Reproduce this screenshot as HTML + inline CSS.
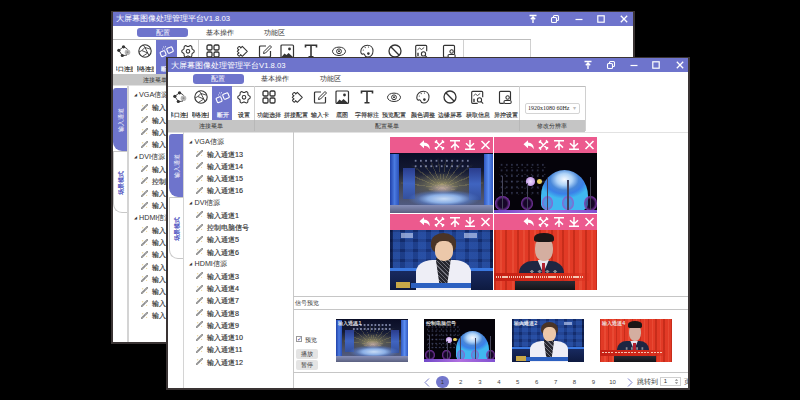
<!DOCTYPE html><html><head><meta charset="utf-8"><style>*{margin:0;padding:0;box-sizing:border-box}
html,body{width:800px;height:400px;overflow:hidden;background:#000;font-family:"Liberation Sans",sans-serif}
.win{-webkit-text-stroke:0}
.tl,.ti{-webkit-text-stroke:0.15px currentColor}
.win{position:absolute;width:524px;height:333px;background:#fff;border:2px solid #3a3434;border-top-width:1px;overflow:hidden}
.inner{position:absolute;left:0;top:1px;width:520px;height:330px}
.inner>*{position:absolute}
.title{left:0;top:-1px;width:520px;height:14px;background:#6e74cc}
.ttxt{position:absolute;left:3px;top:1.5px;font-size:7.7px;line-height:12px;color:#fff;white-space:nowrap;-webkit-text-stroke:0}
.tbtn{position:absolute;top:2px}
.tabs{left:0;top:13px;width:520px;height:14px}
.tline2{left:0;top:26.5px;width:418px;height:1px;background:#bdbdbd}
.pill{position:absolute;left:24.6px;top:2px;width:51.4px;height:9.6px;border-radius:3px;background:#6e74cc;color:#fff;font-size:6.5px;line-height:9.6px;text-align:center;-webkit-text-stroke:0}
.tab{position:absolute;top:2px;width:56px;height:9.6px;font-size:6.5px;line-height:9.6px;text-align:center;color:#333;-webkit-text-stroke:0}
.tb{left:0;top:27px;width:520px;height:34px}
.tb>*{position:absolute}
.act{left:43.5px;top:0;width:20.5px;height:34px;background:#6e74cc}
.ic{top:3px;width:16px;height:16px}
.ic svg{display:block}
.tl{position:absolute;top:24.1px;width:40px;height:9px;font-size:6.2px;line-height:9px;text-align:center;white-space:nowrap}
.tlc{top:0;height:34px;overflow:hidden}
.vdiv{top:0;width:1px;height:45px;background:#d0d0d0}
.dd{left:357px;top:17px;width:55px;height:10.5px;border:1px solid #d4d4d4;border-radius:2px;background:#fff;font-family:"Liberation Serif",serif;font-size:6px;line-height:8.5px;color:#222;padding-left:2px;white-space:nowrap}
.dd i{position:absolute;right:3px;top:0;font-style:normal;color:#bbb;font-size:6px}
.gbar{left:0;top:61px;width:417px;height:11.5px;background:#c5c5c5}
.gbar span{position:absolute;top:0;height:11px;font-size:6.4px;line-height:12.2px;text-align:center;color:#333}
.gd{position:absolute;top:0;width:1px;height:11px;background:#b8b8b8}
.hl2{left:0;top:72.5px;width:520px;height:1px;background:#e2e2e2}
.vtab1{left:0.6px;top:75px;width:14px;height:63.4px;background:#6e74cc;border-radius:3px 0 0 9px}
.vtab2{left:0.6px;top:138.4px;width:14px;height:62px;background:#fff;border:1px solid #c8c8c8;border-right:none;border-radius:0 0 0 9px}
.vtab1 span,.vtab2 span{position:absolute;left:0;top:0;width:63.4px;height:14px;transform-origin:0 0;transform:translate(1.2px,63.4px) rotate(-90deg);font-size:6px;line-height:14px;text-align:center;color:#fff;-webkit-text-stroke:0}
.vtab2 span{color:#4a4ec0;width:62px;height:13px;line-height:13px;transform:translate(1px,62px) rotate(-90deg);-webkit-text-stroke:0.2px #4a4ec0}
.vline{left:14.6px;top:73px;width:1.5px;height:260px;background:#d4d4d4}
.tg,.ti{height:12px;font-size:7.2px;line-height:12px;color:#333;white-space:nowrap}
.tg{left:21px}
.tg i{font-style:normal;font-size:4px;position:relative;top:-1px;margin-right:2.5px;color:#333}
.ti{left:28px;margin-top:0.7px}
.plug{display:inline-block;width:7px;height:7px;margin-right:4px;position:relative;top:0.5px}
.tline{left:125px;top:73px;width:1.2px;height:260px;background:#c8c8c8}
.grid{left:222.3px;top:78.2px;width:208px;height:154px;background:#fff}
.cell{position:absolute;width:103px;height:76px}
.ph{position:absolute;left:0;top:0;width:103px;height:15.5px;background:#ec5a8e}
.ph svg{position:absolute;right:-3px;top:0}
.cell .img{position:absolute;left:0;top:15.5px;width:103px;height:60.5px}
.img{overflow:hidden}
.img b{position:absolute;display:block}
.im1{background:linear-gradient(#0a0d26,#141a34 30%,#3e4048 50%,#4a5068 70%,#505a80 86%)}
.im2{background:#05030a}
.im3{background:radial-gradient(ellipse at 50% 40%,#1a3680,#122a68 70%,#0c1a48)}
.im4{background:#e23a26}
.hl{left:125px;width:395px;height:1px;background:#c6c6c6}
.sp{left:127px;top:239px;font-size:6px;line-height:10px;color:#333}
.chk{left:127.6px;top:277.2px;width:6px;height:6px;border:1px solid #999;font-size:6px;line-height:5px;color:#4040a0;text-align:center;background:#fff}
.chkl{left:137px;top:276px;font-size:6px;line-height:10px;color:#333}
.btn{left:127.6px;width:22px;height:10px;background:#e4e4e4;border-radius:2px;font-size:6px;line-height:10px;text-align:center;color:#333}
.thumb{top:260px;width:71.5px;height:43px}
.thumb b{position:absolute;display:block}
.cap{position:absolute;left:2px;top:1px;font-size:5.4px;line-height:7px;color:#eee;white-space:nowrap;-webkit-text-stroke:0.1px #eee}
.chev{top:318.5px}
.pc{left:268px;top:316.5px;width:12.6px;height:12.6px;border-radius:50%;background:#7377cc;color:#333;font-size:6px;line-height:12.6px;text-align:center}
.pn{top:318.8px;width:12px;height:9px;font-size:6px;line-height:9px;text-align:center;color:#444;-webkit-text-stroke:0}
.jump{left:469px;top:317.5px;font-size:6.5px;line-height:9px;color:#333}
.inp{left:491.7px;top:318px;width:21.5px;height:8.5px;border:1px solid #d0d0d0;font-size:6px;line-height:6.5px;color:#333;padding-left:3px}
.ye{left:515.5px;top:317.5px;font-size:6.5px;line-height:9px;color:#333}
</style></head><body><div class="win" style="left:110.5px;top:10.8px"><div class="inner"><div class="title"><span class="ttxt">大屏幕图像处理管理平台V1.8.03</span><svg class="tbtn" style="left:415.3px" width="10" height="10" viewBox="0 0 10 10"><path d="M1.5 1.5H8.5M5 3V9M2.8 5.2L5 3L7.2 5.2" stroke="#fff" stroke-width="1.4" fill="none"/></svg><svg class="tbtn" style="left:437.5px" width="10" height="10" viewBox="0 0 10 10"><rect x="1.5" y="3.5" width="5" height="5" rx="1" stroke="#fff" stroke-width="1.1" fill="none"/><path d="M3.5 3.5V2.5Q3.5 1.5 4.5 1.5H7.5Q8.5 1.5 8.5 2.5V5.5Q8.5 6.5 7.5 6.5H6.5" stroke="#fff" stroke-width="1.1" fill="none"/></svg><svg class="tbtn" style="left:461.3px" width="10" height="10" viewBox="0 0 10 10"><path d="M1.5 5.5H8.5" stroke="#fff" stroke-width="1.2"/></svg><svg class="tbtn" style="left:483.3px" width="10" height="10" viewBox="0 0 10 10"><rect x="1.8" y="1.8" width="6.4" height="6.4" stroke="#fff" stroke-width="1.2" fill="none"/></svg><svg class="tbtn" style="left:506.7px" width="10" height="10" viewBox="0 0 10 10"><path d="M1.8 1.8L8.2 8.2M8.2 1.8L1.8 8.2" stroke="#fff" stroke-width="1.3"/></svg></div><div class="tabs"><div class="pill">配置</div><div class="tab" style="left:79px">基本操作</div><div class="tab" style="left:134px">功能区</div></div><div class="tline2"></div><div class="tb"><div class="act"></div><div class="ic" style="left:3.5px"><svg width="16" height="16" viewBox="0 0 16 16"><circle cx="11.5" cy="9.3" r="2.8" fill="#b8b8b8"/><circle cx="11.5" cy="9.3" r="1" fill="#888"/><path d="M7.5 3.8L2.8 7.3L6.3 12.5M7.5 3.8Q11 5 11.5 6.5M6.3 12.5Q10 12.5 11 12" stroke="#333" stroke-width="0.9" fill="none"/><circle cx="7.5" cy="3.8" r="1.6" fill="#333"/><circle cx="2.8" cy="7.3" r="1.6" fill="#333"/><circle cx="6.3" cy="12.5" r="1.6" fill="#333"/></svg></div><div class="tlc" style="left:3.0px;width:17px"><div class="tl" style="left:-11.5px;color:#333">串口连接</div></div><div class="ic" style="left:24.5px"><svg width="16" height="16" viewBox="0 0 16 16"><circle cx="8" cy="8" r="6.2" stroke="#333" stroke-width="1.1" fill="none"/><path d="M4.75 7.5L8 4.5L10.75 10L4.75 7.5M4.75 7.5L1.9 9.2M8 4.5L6.2 1.9M8 4.5L13.6 6.2M10.75 10L12.2 13M10.75 10L5.2 13.6" stroke="#333" stroke-width="0.85" fill="none"/></svg></div><div class="tlc" style="left:24.0px;width:17px"><div class="tl" style="left:-11.5px;color:#333">网络连接</div></div><div class="ic" style="left:46.5px"><svg width="16" height="16" viewBox="0 0 16 16"><rect x="1.6" y="8.2" width="5" height="5" rx="1" transform="rotate(-22 4.1 10.7)" stroke="#fff" stroke-width="1.1" fill="none"/><rect x="8.2" y="4.5" width="5.6" height="5.2" rx="1" transform="rotate(-22 11 7.1)" stroke="#fff" stroke-width="1.1" fill="none"/><path d="M3.2 6.2L4 5.6M4.5 3.5L4.8 4.6M6.5 3.2L6.3 4.3M5.5 6L6.3 6.6" stroke="#fff" stroke-width="0.8"/></svg></div><div class="tl" style="left:34.5px;color:#fff">断开</div><div class="ic" style="left:67.5px"><svg width="16" height="16" viewBox="0 0 16 16"><path d="M14.2 8.3 L14.1 9.1 L13.3 9.7 L12.5 10.2 L12.1 10.7 L11.9 11.3 L11.9 12.2 L11.7 13.2 L11.1 13.7 L10.3 14.0 L9.4 13.6 L8.6 13.1 L8.0 13.1 L7.4 13.1 L6.6 13.6 L5.7 14.0 L4.9 13.7 L4.3 13.2 L4.1 12.2 L4.1 11.3 L3.9 10.7 L3.5 10.2 L2.7 9.7 L1.9 9.1 L1.8 8.3 L1.9 7.5 L2.7 6.9 L3.5 6.4 L3.9 5.9 L4.1 5.3 L4.1 4.4 L4.3 3.4 L4.9 2.9 L5.7 2.6 L6.6 3.0 L7.4 3.5 L8.0 3.6 L8.6 3.5 L9.4 3.0 L10.3 2.6 L11.1 2.9 L11.7 3.4 L11.9 4.4 L11.9 5.3 L12.1 5.9 L12.5 6.4 L13.3 6.9 L14.1 7.5z" stroke="#333" stroke-width="1.05" fill="none" stroke-linejoin="round"/><circle cx="8" cy="8.3" r="1.8" stroke="#333" stroke-width="1.05" fill="none"/></svg></div><div class="tl" style="left:55.5px;color:#333">设置</div><div class="ic" style="left:92.5px"><svg width="16" height="16" viewBox="0 0 16 16"><g stroke="#333" stroke-width="1.3" fill="none"><rect x="2" y="2" width="5" height="5" rx="1.3"/><rect x="9" y="2" width="5" height="5" rx="1.3"/><rect x="2" y="9" width="5" height="5" rx="1.3"/><rect x="9" y="9" width="5" height="5" rx="1.3"/></g></svg></div><div class="tl" style="left:80.5px;color:#333">功能选择</div><div class="ic" style="left:120px"><svg width="16" height="16" viewBox="0 0 16 16"><path d="M-4 -4H4V4H1.3C1.6 5 2.6 6.6 0 6.6C-2.6 6.6 -1.6 5 -1.3 4H-4V1.3C-5 1.6 -6.6 2.6 -6.6 0C-6.6 -2.6 -5 -1.6 -4 -1.3Z" transform="translate(9.3,8.3) rotate(45) scale(.88)" stroke="#333" stroke-width="1.2" fill="none" stroke-linejoin="round"/></svg></div><div class="tl" style="left:108px;color:#333">拼接配置</div><div class="ic" style="left:144px"><svg width="16" height="16" viewBox="0 0 16 16"><path d="M9 3H3.5Q2.5 3 2.5 4V13Q2.5 14 3.5 14H12.5Q13.5 14 13.5 13V8" stroke="#333" stroke-width="1.2" fill="none"/><path d="M6.5 10.5L7 8.5L13 2.5L14.5 4L8.5 10z" stroke="#333" stroke-width="1" fill="none" stroke-linejoin="round"/></svg></div><div class="tl" style="left:132px;color:#333">输入卡</div><div class="ic" style="left:166px"><svg width="16" height="16" viewBox="0 0 16 16"><rect x="2" y="2" width="12.5" height="12.5" rx="1" stroke="#333" stroke-width="1.2" fill="none"/><circle cx="10.5" cy="6" r="1.4" fill="#333"/><path d="M2.5 14L5.5 10.5L7.5 12L9.5 10L14 14z" fill="#333"/></svg></div><div class="tl" style="left:154px;color:#333">底图</div><div class="ic" style="left:190.5px"><svg width="16" height="16" viewBox="0 0 16 16"><path d="M2.5 4.5V2.2H13.5V4.5M8 2.2V13.8M5.5 13.8H10.5" stroke="#333" stroke-width="1.6" fill="none"/></svg></div><div class="tl" style="left:178.5px;color:#333">字符标注</div><div class="ic" style="left:218px"><svg width="16" height="16" viewBox="0 0 16 16"><ellipse cx="8" cy="8.3" rx="6.5" ry="4.2" stroke="#333" stroke-width="1" fill="none"/><circle cx="8" cy="8.3" r="2.4" stroke="#333" stroke-width="1" fill="none"/><circle cx="8" cy="8.3" r="1" fill="#333"/></svg></div><div class="tl" style="left:206px;color:#333">预览配置</div><div class="ic" style="left:246.5px"><svg width="16" height="16" viewBox="0 0 16 16"><path d="M8.5 2.2C4.5 2.2 1.8 5 1.8 8.5C1.8 10.5 2.8 11.5 4 11C5 10.6 5.6 11.2 5.8 12.2C6 13.5 7 14 8.5 14C11.8 14 14 11.5 14 8C14 4.6 11.8 2.2 8.5 2.2z" stroke="#333" stroke-width="1.05" fill="none"/><circle cx="4.3" cy="7" r="0.6" fill="#333"/><circle cx="6.2" cy="4.6" r="0.6" fill="#333"/><circle cx="9.5" cy="4" r="0.6" fill="#333"/><circle cx="9.4" cy="10.6" r="1.3" fill="#333"/></svg></div><div class="tl" style="left:234.5px;color:#333">颜色调整</div><div class="ic" style="left:274px"><svg width="16" height="16" viewBox="0 0 16 16"><circle cx="8" cy="8" r="6" stroke="#333" stroke-width="1.3" fill="none"/><path d="M3.8 3.8L12.2 12.2" stroke="#333" stroke-width="1.3"/></svg></div><div class="tl" style="left:262px;color:#333">边缘屏幕</div><div class="ic" style="left:301.5px"><svg width="16" height="16" viewBox="0 0 16 16"><g transform="translate(-0.8,0.3)"><path d="M8.5 14H3.5Q2.5 14 2.5 13V3Q2.5 2 3.5 2H12.5Q13.5 2 13.5 3V8" stroke="#333" stroke-width="1.15" fill="none"/><path d="M4.3 6.5L6.3 4.8L8.3 6.2L11 4.2" stroke="#333" stroke-width="0.85" fill="none"/><path d="M4.8 9.5V12.8" stroke="#333" stroke-width="1.4"/><circle cx="10.3" cy="10.6" r="2.1" stroke="#333" stroke-width="1.1" fill="none"/><path d="M11.8 12.1L14 14.3" stroke="#333" stroke-width="1.1"/></g></svg></div><div class="tl" style="left:289.5px;color:#333">获取信息</div><div class="ic" style="left:329.5px"><svg width="16" height="16" viewBox="0 0 16 16"><g transform="translate(-1,0.3)"><path d="M6.8 14H3.5Q2.5 14 2.5 13V3Q2.5 2 3.5 2H12.5Q13.5 2 13.5 3V10.8" stroke="#333" stroke-width="1.15" fill="none"/><circle cx="10.6" cy="8.2" r="1.7" stroke="#333" stroke-width="1.05" fill="none"/><rect x="7" y="11.2" width="7.2" height="2.9" rx="1.2" stroke="#333" stroke-width="1.05" fill="none"/></g></svg></div><div class="tl" style="left:317.5px;color:#333">异控设置</div><div class="vdiv" style="left:85.5px"></div><div class="vdiv" style="left:350.5px"></div><div class="vdiv" style="left:417px"></div><div class="dd"><span>1920x1080 60Hz</span><i>&#9662;</i></div></div><div class="gbar"><span style="left:0;width:85.5px">连接菜单</span><span style="left:86.5px;width:264px">配置菜单</span><span style="left:351.5px;width:65.5px">修改分辨率</span><div class="gd" style="left:85.5px"></div><div class="gd" style="left:350.5px"></div></div><div class="hl2"></div><div class="vtab1"><span>输入通道</span></div><div class="vtab2"><span>场景模式</span></div><div class="vline"></div><div class="tg" style="top:76.7px"><i>&#9698;</i>VGA信源</div><div class="ti" style="top:88.9px"><svg class="plug" width="7" height="7" viewBox="0 0 7 7"><path d="M0.8 6.2L3 4M3.8 3.2L6.2 0.8" stroke="#8c8c8c" stroke-width="1.9" stroke-linecap="round"/><path d="M1.5 6L2.6 4.9M4.3 2.7L5.6 1.4" stroke="#c8c8c8" stroke-width=".6"/><circle cx="1.6" cy="1.8" r=".8" fill="#ecd8a0"/><circle cx="5.6" cy="5.4" r=".6" fill="#ecd8a0"/></svg>输入通道13</div><div class="ti" style="top:101.2px"><svg class="plug" width="7" height="7" viewBox="0 0 7 7"><path d="M0.8 6.2L3 4M3.8 3.2L6.2 0.8" stroke="#8c8c8c" stroke-width="1.9" stroke-linecap="round"/><path d="M1.5 6L2.6 4.9M4.3 2.7L5.6 1.4" stroke="#c8c8c8" stroke-width=".6"/><circle cx="1.6" cy="1.8" r=".8" fill="#ecd8a0"/><circle cx="5.6" cy="5.4" r=".6" fill="#ecd8a0"/></svg>输入通道14</div><div class="ti" style="top:113.4px"><svg class="plug" width="7" height="7" viewBox="0 0 7 7"><path d="M0.8 6.2L3 4M3.8 3.2L6.2 0.8" stroke="#8c8c8c" stroke-width="1.9" stroke-linecap="round"/><path d="M1.5 6L2.6 4.9M4.3 2.7L5.6 1.4" stroke="#c8c8c8" stroke-width=".6"/><circle cx="1.6" cy="1.8" r=".8" fill="#ecd8a0"/><circle cx="5.6" cy="5.4" r=".6" fill="#ecd8a0"/></svg>输入通道15</div><div class="ti" style="top:125.7px"><svg class="plug" width="7" height="7" viewBox="0 0 7 7"><path d="M0.8 6.2L3 4M3.8 3.2L6.2 0.8" stroke="#8c8c8c" stroke-width="1.9" stroke-linecap="round"/><path d="M1.5 6L2.6 4.9M4.3 2.7L5.6 1.4" stroke="#c8c8c8" stroke-width=".6"/><circle cx="1.6" cy="1.8" r=".8" fill="#ecd8a0"/><circle cx="5.6" cy="5.4" r=".6" fill="#ecd8a0"/></svg>输入通道16</div><div class="tg" style="top:137.9px"><i>&#9698;</i>DVI信源</div><div class="ti" style="top:150.1px"><svg class="plug" width="7" height="7" viewBox="0 0 7 7"><path d="M0.8 6.2L3 4M3.8 3.2L6.2 0.8" stroke="#8c8c8c" stroke-width="1.9" stroke-linecap="round"/><path d="M1.5 6L2.6 4.9M4.3 2.7L5.6 1.4" stroke="#c8c8c8" stroke-width=".6"/><circle cx="1.6" cy="1.8" r=".8" fill="#ecd8a0"/><circle cx="5.6" cy="5.4" r=".6" fill="#ecd8a0"/></svg>输入通道1</div><div class="ti" style="top:162.4px"><svg class="plug" width="7" height="7" viewBox="0 0 7 7"><path d="M0.8 6.2L3 4M3.8 3.2L6.2 0.8" stroke="#8c8c8c" stroke-width="1.9" stroke-linecap="round"/><path d="M1.5 6L2.6 4.9M4.3 2.7L5.6 1.4" stroke="#c8c8c8" stroke-width=".6"/><circle cx="1.6" cy="1.8" r=".8" fill="#ecd8a0"/><circle cx="5.6" cy="5.4" r=".6" fill="#ecd8a0"/></svg>控制电脑信号</div><div class="ti" style="top:174.6px"><svg class="plug" width="7" height="7" viewBox="0 0 7 7"><path d="M0.8 6.2L3 4M3.8 3.2L6.2 0.8" stroke="#8c8c8c" stroke-width="1.9" stroke-linecap="round"/><path d="M1.5 6L2.6 4.9M4.3 2.7L5.6 1.4" stroke="#c8c8c8" stroke-width=".6"/><circle cx="1.6" cy="1.8" r=".8" fill="#ecd8a0"/><circle cx="5.6" cy="5.4" r=".6" fill="#ecd8a0"/></svg>输入通道5</div><div class="ti" style="top:186.9px"><svg class="plug" width="7" height="7" viewBox="0 0 7 7"><path d="M0.8 6.2L3 4M3.8 3.2L6.2 0.8" stroke="#8c8c8c" stroke-width="1.9" stroke-linecap="round"/><path d="M1.5 6L2.6 4.9M4.3 2.7L5.6 1.4" stroke="#c8c8c8" stroke-width=".6"/><circle cx="1.6" cy="1.8" r=".8" fill="#ecd8a0"/><circle cx="5.6" cy="5.4" r=".6" fill="#ecd8a0"/></svg>输入通道6</div><div class="tg" style="top:199.1px"><i>&#9698;</i>HDMI信源</div><div class="ti" style="top:211.3px"><svg class="plug" width="7" height="7" viewBox="0 0 7 7"><path d="M0.8 6.2L3 4M3.8 3.2L6.2 0.8" stroke="#8c8c8c" stroke-width="1.9" stroke-linecap="round"/><path d="M1.5 6L2.6 4.9M4.3 2.7L5.6 1.4" stroke="#c8c8c8" stroke-width=".6"/><circle cx="1.6" cy="1.8" r=".8" fill="#ecd8a0"/><circle cx="5.6" cy="5.4" r=".6" fill="#ecd8a0"/></svg>输入通道3</div><div class="ti" style="top:223.6px"><svg class="plug" width="7" height="7" viewBox="0 0 7 7"><path d="M0.8 6.2L3 4M3.8 3.2L6.2 0.8" stroke="#8c8c8c" stroke-width="1.9" stroke-linecap="round"/><path d="M1.5 6L2.6 4.9M4.3 2.7L5.6 1.4" stroke="#c8c8c8" stroke-width=".6"/><circle cx="1.6" cy="1.8" r=".8" fill="#ecd8a0"/><circle cx="5.6" cy="5.4" r=".6" fill="#ecd8a0"/></svg>输入通道4</div><div class="ti" style="top:235.8px"><svg class="plug" width="7" height="7" viewBox="0 0 7 7"><path d="M0.8 6.2L3 4M3.8 3.2L6.2 0.8" stroke="#8c8c8c" stroke-width="1.9" stroke-linecap="round"/><path d="M1.5 6L2.6 4.9M4.3 2.7L5.6 1.4" stroke="#c8c8c8" stroke-width=".6"/><circle cx="1.6" cy="1.8" r=".8" fill="#ecd8a0"/><circle cx="5.6" cy="5.4" r=".6" fill="#ecd8a0"/></svg>输入通道7</div><div class="ti" style="top:248.1px"><svg class="plug" width="7" height="7" viewBox="0 0 7 7"><path d="M0.8 6.2L3 4M3.8 3.2L6.2 0.8" stroke="#8c8c8c" stroke-width="1.9" stroke-linecap="round"/><path d="M1.5 6L2.6 4.9M4.3 2.7L5.6 1.4" stroke="#c8c8c8" stroke-width=".6"/><circle cx="1.6" cy="1.8" r=".8" fill="#ecd8a0"/><circle cx="5.6" cy="5.4" r=".6" fill="#ecd8a0"/></svg>输入通道8</div><div class="ti" style="top:260.3px"><svg class="plug" width="7" height="7" viewBox="0 0 7 7"><path d="M0.8 6.2L3 4M3.8 3.2L6.2 0.8" stroke="#8c8c8c" stroke-width="1.9" stroke-linecap="round"/><path d="M1.5 6L2.6 4.9M4.3 2.7L5.6 1.4" stroke="#c8c8c8" stroke-width=".6"/><circle cx="1.6" cy="1.8" r=".8" fill="#ecd8a0"/><circle cx="5.6" cy="5.4" r=".6" fill="#ecd8a0"/></svg>输入通道9</div><div class="ti" style="top:272.5px"><svg class="plug" width="7" height="7" viewBox="0 0 7 7"><path d="M0.8 6.2L3 4M3.8 3.2L6.2 0.8" stroke="#8c8c8c" stroke-width="1.9" stroke-linecap="round"/><path d="M1.5 6L2.6 4.9M4.3 2.7L5.6 1.4" stroke="#c8c8c8" stroke-width=".6"/><circle cx="1.6" cy="1.8" r=".8" fill="#ecd8a0"/><circle cx="5.6" cy="5.4" r=".6" fill="#ecd8a0"/></svg>输入通道10</div><div class="ti" style="top:284.8px"><svg class="plug" width="7" height="7" viewBox="0 0 7 7"><path d="M0.8 6.2L3 4M3.8 3.2L6.2 0.8" stroke="#8c8c8c" stroke-width="1.9" stroke-linecap="round"/><path d="M1.5 6L2.6 4.9M4.3 2.7L5.6 1.4" stroke="#c8c8c8" stroke-width=".6"/><circle cx="1.6" cy="1.8" r=".8" fill="#ecd8a0"/><circle cx="5.6" cy="5.4" r=".6" fill="#ecd8a0"/></svg>输入通道11</div><div class="ti" style="top:297.0px"><svg class="plug" width="7" height="7" viewBox="0 0 7 7"><path d="M0.8 6.2L3 4M3.8 3.2L6.2 0.8" stroke="#8c8c8c" stroke-width="1.9" stroke-linecap="round"/><path d="M1.5 6L2.6 4.9M4.3 2.7L5.6 1.4" stroke="#c8c8c8" stroke-width=".6"/><circle cx="1.6" cy="1.8" r=".8" fill="#ecd8a0"/><circle cx="5.6" cy="5.4" r=".6" fill="#ecd8a0"/></svg>输入通道12</div><div class="tline"></div><div class="grid"><div class="cell" style="left:0px;top:0px"><div class="ph"><svg width="80" height="15" viewBox="0 0 80 15"><path d="M3.5 7.2L8 3.2V5.6Q13.5 5.6 14 12.2Q11.5 8.8 8 8.8V11.2z" fill="#fff"/><g transform="translate(23.5,8)" stroke="#fff" stroke-width="1.5" fill="none"><path d="M-3.8 -3.8L3.8 3.8M3.8 -3.8L-3.8 3.8M-4.6 -2.4L-2.4 -4.6M4.6 -2.4L2.4 -4.6M-4.6 2.4L-2.4 4.6M4.6 2.4L2.4 4.6"/></g><g transform="translate(39,8)" stroke="#fff" stroke-width="1.5" fill="none"><path d="M-5 -4.2H5M0 -4.2V5M-4 2.6L0 -1.2L4 2.6"/></g><g transform="translate(54,8)" stroke="#fff" stroke-width="1.5" fill="none"><path d="M-5 4.3H5M0 -5V4.3M-4 -1.8L0 2L4 -1.8"/></g><g transform="translate(69.5,8)" stroke="#fff" stroke-width="1.6" fill="none"><path d="M-4 -4L4 4M4 -4L-4 4"/></g></svg></div><div class="img im1"><b style="left:10%;top:0;width:80%;height:62%;background:repeating-conic-gradient(from -60deg at 50% 95%,transparent 0deg 6deg,rgba(225,205,110,.32) 6deg 9deg,transparent 9deg 15deg);-webkit-mask-image:radial-gradient(ellipse 60% 90% at 50% 100%,#000 40%,transparent 100%)"></b><b style="left:22%;top:9%;width:56%;height:18%;background:radial-gradient(circle,rgba(200,210,250,.55) 0 0.7px,transparent 1.3px) 0 0/9% 50%"></b><b style="left:18%;top:30%;width:64%;height:42%;background:radial-gradient(ellipse 50% 50% at 50% 55%,rgba(175,165,110,.75),rgba(100,100,85,.5) 60%,transparent 100%)"></b><b style="left:0;top:2%;width:8%;height:84%;background:linear-gradient(90deg,#2040a8,#4a7ae0 50%,#2a50b8)"></b><b style="right:0;top:2%;width:9%;height:86%;background:linear-gradient(90deg,#3058c0,#5a8cf0 50%,#3058c0)"></b><b style="left:12%;top:26%;width:12%;height:50%;background:linear-gradient(#2a3c8c,#4064c0 50%,#34509c)"></b><b style="left:76%;top:26%;width:12%;height:52%;background:linear-gradient(#2a3c8c,#4064c0 50%,#34509c)"></b><b style="left:17%;top:58%;width:70%;height:30%;background:radial-gradient(ellipse 50% 50% at 50% 60%,#c8dcf6,#8cb0e6 45%,rgba(90,130,210,.55) 72%,transparent 100%)"></b><b style="left:30%;top:46%;width:42%;height:26%;background:radial-gradient(ellipse 50% 50%,rgba(235,200,210,.55),transparent 70%)"></b><b style="left:0;top:86%;width:100%;height:14%;background:linear-gradient(#8890b8,#5a6080)"></b></div></div><div class="cell" style="left:104px;top:0px"><div class="ph"><svg width="80" height="15" viewBox="0 0 80 15"><path d="M3.5 7.2L8 3.2V5.6Q13.5 5.6 14 12.2Q11.5 8.8 8 8.8V11.2z" fill="#fff"/><g transform="translate(23.5,8)" stroke="#fff" stroke-width="1.5" fill="none"><path d="M-3.8 -3.8L3.8 3.8M3.8 -3.8L-3.8 3.8M-4.6 -2.4L-2.4 -4.6M4.6 -2.4L2.4 -4.6M-4.6 2.4L-2.4 4.6M4.6 2.4L2.4 4.6"/></g><g transform="translate(39,8)" stroke="#fff" stroke-width="1.5" fill="none"><path d="M-5 -4.2H5M0 -4.2V5M-4 2.6L0 -1.2L4 2.6"/></g><g transform="translate(54,8)" stroke="#fff" stroke-width="1.5" fill="none"><path d="M-5 4.3H5M0 -5V4.3M-4 -1.8L0 2L4 -1.8"/></g><g transform="translate(69.5,8)" stroke="#fff" stroke-width="1.6" fill="none"><path d="M-4 -4L4 4M4 -4L-4 4"/></g></svg></div><div class="img im2"><b style="left:5%;top:15%;width:45%;height:55%;background:radial-gradient(circle,rgba(150,170,240,.35) 0 0.5px,transparent 1px) 0 0/11% 17%,radial-gradient(circle,rgba(200,210,255,.25) 0 0.5px,transparent 1px) 3px 2px/14% 21%"></b><b style="left:45%;top:28%;width:46%;height:72%;border-radius:50% 50% 35% 35%/60% 60% 20% 20%;background:radial-gradient(ellipse 55% 45% at 50% 22%,#f4f8ff 0%,#b0d4f8 30%,rgba(80,150,240,.9) 55%,#3a80e8 75%,#40b8f0 100%)"></b><b style="left:31%;top:41%;width:9%;height:14%;border-radius:50%;background:radial-gradient(#f0e0ff,#b080e0)"></b><b style="left:41.5%;top:44%;width:5%;height:8%;border-radius:50%;background:#e8d060"></b><b style="left:1%;top:72%;width:14%;height:24%;border-radius:50%;background:radial-gradient(rgba(40,10,70,.5) 40%,#9040c0 75%,rgba(140,60,200,.6))"></b><b style="left:26%;top:73%;width:12%;height:22%;border-radius:50%;background:radial-gradient(rgba(40,10,70,.5) 40%,#9040c0 75%,rgba(140,60,200,.6))"></b><b style="left:46%;top:72%;width:11%;height:23%;border-radius:50%;background:radial-gradient(rgba(100,80,200,.3) 40%,#a050c8 80%,rgba(140,60,200,.6))"></b><b style="left:66%;top:72%;width:11%;height:23%;border-radius:50%;background:radial-gradient(rgba(100,80,200,.3) 40%,#a050c8 80%,rgba(140,60,200,.6))"></b><b style="left:87%;top:72%;width:13%;height:24%;border-radius:50%;background:radial-gradient(rgba(40,10,70,.5) 40%,#9040c0 75%,rgba(140,60,200,.6))"></b><b style="left:0;top:94%;width:100%;height:6%;background:linear-gradient(90deg,#7048c8,#b070e0,#8050d0)"></b><b style="left:7.5%;top:38%;width:1.2%;height:56%;background:#45455a"></b><b style="left:32%;top:50%;width:1.2%;height:44%;background:#45455a"></b><b style="left:51%;top:42%;width:1.5%;height:52%;background:#40405a"></b><b style="left:71%;top:45%;width:1.2%;height:49%;background:#40405a"></b><b style="left:93%;top:40%;width:1.2%;height:54%;background:#45455a"></b></div></div><div class="cell" style="left:0px;top:77px"><div class="ph"><svg width="80" height="15" viewBox="0 0 80 15"><path d="M3.5 7.2L8 3.2V5.6Q13.5 5.6 14 12.2Q11.5 8.8 8 8.8V11.2z" fill="#fff"/><g transform="translate(23.5,8)" stroke="#fff" stroke-width="1.5" fill="none"><path d="M-3.8 -3.8L3.8 3.8M3.8 -3.8L-3.8 3.8M-4.6 -2.4L-2.4 -4.6M4.6 -2.4L2.4 -4.6M-4.6 2.4L-2.4 4.6M4.6 2.4L2.4 4.6"/></g><g transform="translate(39,8)" stroke="#fff" stroke-width="1.5" fill="none"><path d="M-5 -4.2H5M0 -4.2V5M-4 2.6L0 -1.2L4 2.6"/></g><g transform="translate(54,8)" stroke="#fff" stroke-width="1.5" fill="none"><path d="M-5 4.3H5M0 -5V4.3M-4 -1.8L0 2L4 -1.8"/></g><g transform="translate(69.5,8)" stroke="#fff" stroke-width="1.6" fill="none"><path d="M-4 -4L4 4M4 -4L-4 4"/></g></svg></div><div class="img im3"><b style="left:0;top:0;width:100%;height:66%;background:linear-gradient(90deg,rgba(8,16,50,.6) 0 3%,transparent 3% 97%,rgba(8,16,50,.6) 97%),repeating-linear-gradient(90deg,transparent 0 2%,rgba(60,110,210,.32) 2% 10%,transparent 10% 12.5%),repeating-linear-gradient(transparent 0 6%,rgba(50,100,200,.3) 6% 22%,transparent 22% 25%)"></b><b style="left:10%;top:6%;width:12%;height:7%;background:rgba(220,230,255,.55)"></b><b style="left:72%;top:6%;width:12%;height:7%;background:rgba(220,230,255,.55)"></b><b style="left:0;top:64%;width:100%;height:5%;background:#3a78e0"></b><b style="left:0;top:69%;width:100%;height:31%;background:linear-gradient(#182a60,#0e1a40)"></b><b style="left:25%;top:50%;width:53%;height:50%;border-radius:30% 30% 0 0/40% 40% 0 0;background:#eeeef6"></b><b style="left:44%;top:47%;width:15%;height:44%;background:repeating-linear-gradient(45deg,#26262e 0 2px,#70707a 2px 3px);clip-path:polygon(0 0,100% 0,75% 100%,25% 100%)"></b><b style="left:40%;top:6%;width:24%;height:32%;border-radius:50% 50% 35% 35%;background:#4a3426"></b><b style="left:43%;top:18%;width:18%;height:33%;border-radius:40% 40% 45% 45%;background:#ecc8aa"></b><b style="left:20%;top:88%;width:58%;height:9%;background:#2c60c0"></b><b style="left:6%;top:86%;width:13%;height:11%;background:#c8a848"></b></div></div><div class="cell" style="left:104px;top:77px"><div class="ph"><svg width="80" height="15" viewBox="0 0 80 15"><path d="M3.5 7.2L8 3.2V5.6Q13.5 5.6 14 12.2Q11.5 8.8 8 8.8V11.2z" fill="#fff"/><g transform="translate(23.5,8)" stroke="#fff" stroke-width="1.5" fill="none"><path d="M-3.8 -3.8L3.8 3.8M3.8 -3.8L-3.8 3.8M-4.6 -2.4L-2.4 -4.6M4.6 -2.4L2.4 -4.6M-4.6 2.4L-2.4 4.6M4.6 2.4L2.4 4.6"/></g><g transform="translate(39,8)" stroke="#fff" stroke-width="1.5" fill="none"><path d="M-5 -4.2H5M0 -4.2V5M-4 2.6L0 -1.2L4 2.6"/></g><g transform="translate(54,8)" stroke="#fff" stroke-width="1.5" fill="none"><path d="M-5 4.3H5M0 -5V4.3M-4 -1.8L0 2L4 -1.8"/></g><g transform="translate(69.5,8)" stroke="#fff" stroke-width="1.6" fill="none"><path d="M-4 -4L4 4M4 -4L-4 4"/></g></svg></div><div class="img im4"><b style="left:0;top:0;width:100%;height:100%;background:repeating-linear-gradient(90deg,rgba(150,20,5,.35) 0 2%,transparent 2% 6%,rgba(255,130,100,.22) 6% 8%,transparent 8% 11%)"></b><b style="left:24%;top:52%;width:44%;height:48%;border-radius:30% 30% 0 0/40% 40% 0 0;background:#1e2642"></b><b style="left:42%;top:50%;width:11%;height:22%;background:#e8e4ec;clip-path:polygon(0 0,100% 0,50% 100%)"></b><b style="left:46%;top:55%;width:3.5%;height:18%;background:#b02030"></b><b style="left:40%;top:12%;width:17%;height:40%;border-radius:45%;background:#d4aea0"></b><b style="left:39%;top:5%;width:19%;height:15%;border-radius:50% 50% 25% 25%;background:#1a1616"></b><b style="left:33%;top:66%;width:30%;height:6%;background:radial-gradient(circle,#8a8a90 0 35%,transparent 40%) 0 0/25% 100%"></b><b style="left:0;top:72%;width:92%;height:13%;background:linear-gradient(90deg,#c42014,#d42a1a 70%,rgba(212,42,26,.2))"></b><b style="left:2%;top:76%;width:84%;height:4%;background:repeating-linear-gradient(90deg,rgba(255,235,215,.8) 0 1.5%,transparent 1.5% 2.4%)"></b><b style="left:20%;top:85%;width:58%;height:15%;background:linear-gradient(#2a2a34,#141418)"></b></div></div></div><div class="hl" style="top:237px"></div><div class="sp">信号预览</div><div class="hl" style="top:250px"></div><div class="chk">&#10003;</div><div class="chkl">预览</div><div class="btn" style="top:289.5px">播放</div><div class="btn" style="top:301.3px">暂停</div><div class="thumb img im1" style="left:168.4px"><b style="left:10%;top:0;width:80%;height:62%;background:repeating-conic-gradient(from -60deg at 50% 95%,transparent 0deg 6deg,rgba(225,205,110,.32) 6deg 9deg,transparent 9deg 15deg);-webkit-mask-image:radial-gradient(ellipse 60% 90% at 50% 100%,#000 40%,transparent 100%)"></b><b style="left:22%;top:9%;width:56%;height:18%;background:radial-gradient(circle,rgba(200,210,250,.55) 0 0.7px,transparent 1.3px) 0 0/9% 50%"></b><b style="left:18%;top:30%;width:64%;height:42%;background:radial-gradient(ellipse 50% 50% at 50% 55%,rgba(175,165,110,.75),rgba(100,100,85,.5) 60%,transparent 100%)"></b><b style="left:0;top:2%;width:8%;height:84%;background:linear-gradient(90deg,#2040a8,#4a7ae0 50%,#2a50b8)"></b><b style="right:0;top:2%;width:9%;height:86%;background:linear-gradient(90deg,#3058c0,#5a8cf0 50%,#3058c0)"></b><b style="left:12%;top:26%;width:12%;height:50%;background:linear-gradient(#2a3c8c,#4064c0 50%,#34509c)"></b><b style="left:76%;top:26%;width:12%;height:52%;background:linear-gradient(#2a3c8c,#4064c0 50%,#34509c)"></b><b style="left:17%;top:58%;width:70%;height:30%;background:radial-gradient(ellipse 50% 50% at 50% 60%,#c8dcf6,#8cb0e6 45%,rgba(90,130,210,.55) 72%,transparent 100%)"></b><b style="left:30%;top:46%;width:42%;height:26%;background:radial-gradient(ellipse 50% 50%,rgba(235,200,210,.55),transparent 70%)"></b><b style="left:0;top:86%;width:100%;height:14%;background:linear-gradient(#8890b8,#5a6080)"></b><span class="cap">输入通道1</span></div><div class="thumb img im2" style="left:255.8px"><b style="left:5%;top:15%;width:45%;height:55%;background:radial-gradient(circle,rgba(150,170,240,.35) 0 0.5px,transparent 1px) 0 0/11% 17%,radial-gradient(circle,rgba(200,210,255,.25) 0 0.5px,transparent 1px) 3px 2px/14% 21%"></b><b style="left:45%;top:28%;width:46%;height:72%;border-radius:50% 50% 35% 35%/60% 60% 20% 20%;background:radial-gradient(ellipse 55% 45% at 50% 22%,#f4f8ff 0%,#b0d4f8 30%,rgba(80,150,240,.9) 55%,#3a80e8 75%,#40b8f0 100%)"></b><b style="left:31%;top:41%;width:9%;height:14%;border-radius:50%;background:radial-gradient(#f0e0ff,#b080e0)"></b><b style="left:41.5%;top:44%;width:5%;height:8%;border-radius:50%;background:#e8d060"></b><b style="left:1%;top:72%;width:14%;height:24%;border-radius:50%;background:radial-gradient(rgba(40,10,70,.5) 40%,#9040c0 75%,rgba(140,60,200,.6))"></b><b style="left:26%;top:73%;width:12%;height:22%;border-radius:50%;background:radial-gradient(rgba(40,10,70,.5) 40%,#9040c0 75%,rgba(140,60,200,.6))"></b><b style="left:46%;top:72%;width:11%;height:23%;border-radius:50%;background:radial-gradient(rgba(100,80,200,.3) 40%,#a050c8 80%,rgba(140,60,200,.6))"></b><b style="left:66%;top:72%;width:11%;height:23%;border-radius:50%;background:radial-gradient(rgba(100,80,200,.3) 40%,#a050c8 80%,rgba(140,60,200,.6))"></b><b style="left:87%;top:72%;width:13%;height:24%;border-radius:50%;background:radial-gradient(rgba(40,10,70,.5) 40%,#9040c0 75%,rgba(140,60,200,.6))"></b><b style="left:0;top:94%;width:100%;height:6%;background:linear-gradient(90deg,#7048c8,#b070e0,#8050d0)"></b><b style="left:7.5%;top:38%;width:1.2%;height:56%;background:#45455a"></b><b style="left:32%;top:50%;width:1.2%;height:44%;background:#45455a"></b><b style="left:51%;top:42%;width:1.5%;height:52%;background:#40405a"></b><b style="left:71%;top:45%;width:1.2%;height:49%;background:#40405a"></b><b style="left:93%;top:40%;width:1.2%;height:54%;background:#45455a"></b><span class="cap">控制电脑信号</span></div><div class="thumb img im3" style="left:344.2px"><b style="left:0;top:0;width:100%;height:66%;background:linear-gradient(90deg,rgba(8,16,50,.6) 0 3%,transparent 3% 97%,rgba(8,16,50,.6) 97%),repeating-linear-gradient(90deg,transparent 0 2%,rgba(60,110,210,.32) 2% 10%,transparent 10% 12.5%),repeating-linear-gradient(transparent 0 6%,rgba(50,100,200,.3) 6% 22%,transparent 22% 25%)"></b><b style="left:10%;top:6%;width:12%;height:7%;background:rgba(220,230,255,.55)"></b><b style="left:72%;top:6%;width:12%;height:7%;background:rgba(220,230,255,.55)"></b><b style="left:0;top:64%;width:100%;height:5%;background:#3a78e0"></b><b style="left:0;top:69%;width:100%;height:31%;background:linear-gradient(#182a60,#0e1a40)"></b><b style="left:25%;top:50%;width:53%;height:50%;border-radius:30% 30% 0 0/40% 40% 0 0;background:#eeeef6"></b><b style="left:44%;top:47%;width:15%;height:44%;background:repeating-linear-gradient(45deg,#26262e 0 2px,#70707a 2px 3px);clip-path:polygon(0 0,100% 0,75% 100%,25% 100%)"></b><b style="left:40%;top:6%;width:24%;height:32%;border-radius:50% 50% 35% 35%;background:#4a3426"></b><b style="left:43%;top:18%;width:18%;height:33%;border-radius:40% 40% 45% 45%;background:#ecc8aa"></b><b style="left:20%;top:88%;width:58%;height:9%;background:#2c60c0"></b><b style="left:6%;top:86%;width:13%;height:11%;background:#c8a848"></b><span class="cap">输入通道2</span></div><div class="thumb img im4" style="left:432.2px"><b style="left:0;top:0;width:100%;height:100%;background:repeating-linear-gradient(90deg,rgba(150,20,5,.35) 0 2%,transparent 2% 6%,rgba(255,130,100,.22) 6% 8%,transparent 8% 11%)"></b><b style="left:24%;top:52%;width:44%;height:48%;border-radius:30% 30% 0 0/40% 40% 0 0;background:#1e2642"></b><b style="left:42%;top:50%;width:11%;height:22%;background:#e8e4ec;clip-path:polygon(0 0,100% 0,50% 100%)"></b><b style="left:46%;top:55%;width:3.5%;height:18%;background:#b02030"></b><b style="left:40%;top:12%;width:17%;height:40%;border-radius:45%;background:#d4aea0"></b><b style="left:39%;top:5%;width:19%;height:15%;border-radius:50% 50% 25% 25%;background:#1a1616"></b><b style="left:33%;top:66%;width:30%;height:6%;background:radial-gradient(circle,#8a8a90 0 35%,transparent 40%) 0 0/25% 100%"></b><b style="left:0;top:72%;width:92%;height:13%;background:linear-gradient(90deg,#c42014,#d42a1a 70%,rgba(212,42,26,.2))"></b><b style="left:2%;top:76%;width:84%;height:4%;background:repeating-linear-gradient(90deg,rgba(255,235,215,.8) 0 1.5%,transparent 1.5% 2.4%)"></b><b style="left:20%;top:85%;width:58%;height:15%;background:linear-gradient(#2a2a34,#141418)"></b><span class="cap">输入通道4</span></div><div class="hl" style="top:313px"></div><svg class="chev" style="left:255.5px" width="6" height="9" viewBox="0 0 6 9"><path d="M5 0.5L1 4.5L5 8.5" stroke="#7a7ec8" stroke-width="1" fill="none"/></svg><div class="pc">1</div><div class="pn" style="left:286.7px">2</div><div class="pn" style="left:305.8px">3</div><div class="pn" style="left:325.0px">4</div><div class="pn" style="left:343.7px">5</div><div class="pn" style="left:362.6px">6</div><div class="pn" style="left:381.6px">7</div><div class="pn" style="left:400.5px">8</div><div class="pn" style="left:419.3px">9</div><div class="pn" style="left:438.5px">10</div><svg class="chev" style="left:459px" width="6" height="9" viewBox="0 0 6 9"><path d="M1 0.5L5 4.5L1 8.5" stroke="#7a7ec8" stroke-width="1" fill="none"/></svg><div class="jump">跳转到</div><div class="inp">1<svg width="5" height="7" viewBox="0 0 5 7" style="position:absolute;right:1.5px;top:0"><path d="M0.8 2.8L2.5 1L4.2 2.8zM0.8 4.2L2.5 6L4.2 4.2z" fill="#888"/></svg></div><div class="ye">页</div></div></div><div class="win" style="left:166px;top:57px"><div class="inner"><div class="title"><span class="ttxt">大屏幕图像处理管理平台V1.8.03</span><svg class="tbtn" style="left:415.3px" width="10" height="10" viewBox="0 0 10 10"><path d="M1.5 1.5H8.5M5 3V9M2.8 5.2L5 3L7.2 5.2" stroke="#fff" stroke-width="1.4" fill="none"/></svg><svg class="tbtn" style="left:437.5px" width="10" height="10" viewBox="0 0 10 10"><rect x="1.5" y="3.5" width="5" height="5" rx="1" stroke="#fff" stroke-width="1.1" fill="none"/><path d="M3.5 3.5V2.5Q3.5 1.5 4.5 1.5H7.5Q8.5 1.5 8.5 2.5V5.5Q8.5 6.5 7.5 6.5H6.5" stroke="#fff" stroke-width="1.1" fill="none"/></svg><svg class="tbtn" style="left:461.3px" width="10" height="10" viewBox="0 0 10 10"><path d="M1.5 5.5H8.5" stroke="#fff" stroke-width="1.2"/></svg><svg class="tbtn" style="left:483.3px" width="10" height="10" viewBox="0 0 10 10"><rect x="1.8" y="1.8" width="6.4" height="6.4" stroke="#fff" stroke-width="1.2" fill="none"/></svg><svg class="tbtn" style="left:506.7px" width="10" height="10" viewBox="0 0 10 10"><path d="M1.8 1.8L8.2 8.2M8.2 1.8L1.8 8.2" stroke="#fff" stroke-width="1.3"/></svg></div><div class="tabs"><div class="pill">配置</div><div class="tab" style="left:79px">基本操作</div><div class="tab" style="left:134px">功能区</div></div><div class="tline2"></div><div class="tb"><div class="act"></div><div class="ic" style="left:3.5px"><svg width="16" height="16" viewBox="0 0 16 16"><circle cx="11.5" cy="9.3" r="2.8" fill="#b8b8b8"/><circle cx="11.5" cy="9.3" r="1" fill="#888"/><path d="M7.5 3.8L2.8 7.3L6.3 12.5M7.5 3.8Q11 5 11.5 6.5M6.3 12.5Q10 12.5 11 12" stroke="#333" stroke-width="0.9" fill="none"/><circle cx="7.5" cy="3.8" r="1.6" fill="#333"/><circle cx="2.8" cy="7.3" r="1.6" fill="#333"/><circle cx="6.3" cy="12.5" r="1.6" fill="#333"/></svg></div><div class="tlc" style="left:3.0px;width:17px"><div class="tl" style="left:-11.5px;color:#333">串口连接</div></div><div class="ic" style="left:24.5px"><svg width="16" height="16" viewBox="0 0 16 16"><circle cx="8" cy="8" r="6.2" stroke="#333" stroke-width="1.1" fill="none"/><path d="M4.75 7.5L8 4.5L10.75 10L4.75 7.5M4.75 7.5L1.9 9.2M8 4.5L6.2 1.9M8 4.5L13.6 6.2M10.75 10L12.2 13M10.75 10L5.2 13.6" stroke="#333" stroke-width="0.85" fill="none"/></svg></div><div class="tlc" style="left:24.0px;width:17px"><div class="tl" style="left:-11.5px;color:#333">网络连接</div></div><div class="ic" style="left:46.5px"><svg width="16" height="16" viewBox="0 0 16 16"><rect x="1.6" y="8.2" width="5" height="5" rx="1" transform="rotate(-22 4.1 10.7)" stroke="#fff" stroke-width="1.1" fill="none"/><rect x="8.2" y="4.5" width="5.6" height="5.2" rx="1" transform="rotate(-22 11 7.1)" stroke="#fff" stroke-width="1.1" fill="none"/><path d="M3.2 6.2L4 5.6M4.5 3.5L4.8 4.6M6.5 3.2L6.3 4.3M5.5 6L6.3 6.6" stroke="#fff" stroke-width="0.8"/></svg></div><div class="tl" style="left:34.5px;color:#fff">断开</div><div class="ic" style="left:67.5px"><svg width="16" height="16" viewBox="0 0 16 16"><path d="M14.2 8.3 L14.1 9.1 L13.3 9.7 L12.5 10.2 L12.1 10.7 L11.9 11.3 L11.9 12.2 L11.7 13.2 L11.1 13.7 L10.3 14.0 L9.4 13.6 L8.6 13.1 L8.0 13.1 L7.4 13.1 L6.6 13.6 L5.7 14.0 L4.9 13.7 L4.3 13.2 L4.1 12.2 L4.1 11.3 L3.9 10.7 L3.5 10.2 L2.7 9.7 L1.9 9.1 L1.8 8.3 L1.9 7.5 L2.7 6.9 L3.5 6.4 L3.9 5.9 L4.1 5.3 L4.1 4.4 L4.3 3.4 L4.9 2.9 L5.7 2.6 L6.6 3.0 L7.4 3.5 L8.0 3.6 L8.6 3.5 L9.4 3.0 L10.3 2.6 L11.1 2.9 L11.7 3.4 L11.9 4.4 L11.9 5.3 L12.1 5.9 L12.5 6.4 L13.3 6.9 L14.1 7.5z" stroke="#333" stroke-width="1.05" fill="none" stroke-linejoin="round"/><circle cx="8" cy="8.3" r="1.8" stroke="#333" stroke-width="1.05" fill="none"/></svg></div><div class="tl" style="left:55.5px;color:#333">设置</div><div class="ic" style="left:92.5px"><svg width="16" height="16" viewBox="0 0 16 16"><g stroke="#333" stroke-width="1.3" fill="none"><rect x="2" y="2" width="5" height="5" rx="1.3"/><rect x="9" y="2" width="5" height="5" rx="1.3"/><rect x="2" y="9" width="5" height="5" rx="1.3"/><rect x="9" y="9" width="5" height="5" rx="1.3"/></g></svg></div><div class="tl" style="left:80.5px;color:#333">功能选择</div><div class="ic" style="left:120px"><svg width="16" height="16" viewBox="0 0 16 16"><path d="M-4 -4H4V4H1.3C1.6 5 2.6 6.6 0 6.6C-2.6 6.6 -1.6 5 -1.3 4H-4V1.3C-5 1.6 -6.6 2.6 -6.6 0C-6.6 -2.6 -5 -1.6 -4 -1.3Z" transform="translate(9.3,8.3) rotate(45) scale(.88)" stroke="#333" stroke-width="1.2" fill="none" stroke-linejoin="round"/></svg></div><div class="tl" style="left:108px;color:#333">拼接配置</div><div class="ic" style="left:144px"><svg width="16" height="16" viewBox="0 0 16 16"><path d="M9 3H3.5Q2.5 3 2.5 4V13Q2.5 14 3.5 14H12.5Q13.5 14 13.5 13V8" stroke="#333" stroke-width="1.2" fill="none"/><path d="M6.5 10.5L7 8.5L13 2.5L14.5 4L8.5 10z" stroke="#333" stroke-width="1" fill="none" stroke-linejoin="round"/></svg></div><div class="tl" style="left:132px;color:#333">输入卡</div><div class="ic" style="left:166px"><svg width="16" height="16" viewBox="0 0 16 16"><rect x="2" y="2" width="12.5" height="12.5" rx="1" stroke="#333" stroke-width="1.2" fill="none"/><circle cx="10.5" cy="6" r="1.4" fill="#333"/><path d="M2.5 14L5.5 10.5L7.5 12L9.5 10L14 14z" fill="#333"/></svg></div><div class="tl" style="left:154px;color:#333">底图</div><div class="ic" style="left:190.5px"><svg width="16" height="16" viewBox="0 0 16 16"><path d="M2.5 4.5V2.2H13.5V4.5M8 2.2V13.8M5.5 13.8H10.5" stroke="#333" stroke-width="1.6" fill="none"/></svg></div><div class="tl" style="left:178.5px;color:#333">字符标注</div><div class="ic" style="left:218px"><svg width="16" height="16" viewBox="0 0 16 16"><ellipse cx="8" cy="8.3" rx="6.5" ry="4.2" stroke="#333" stroke-width="1" fill="none"/><circle cx="8" cy="8.3" r="2.4" stroke="#333" stroke-width="1" fill="none"/><circle cx="8" cy="8.3" r="1" fill="#333"/></svg></div><div class="tl" style="left:206px;color:#333">预览配置</div><div class="ic" style="left:246.5px"><svg width="16" height="16" viewBox="0 0 16 16"><path d="M8.5 2.2C4.5 2.2 1.8 5 1.8 8.5C1.8 10.5 2.8 11.5 4 11C5 10.6 5.6 11.2 5.8 12.2C6 13.5 7 14 8.5 14C11.8 14 14 11.5 14 8C14 4.6 11.8 2.2 8.5 2.2z" stroke="#333" stroke-width="1.05" fill="none"/><circle cx="4.3" cy="7" r="0.6" fill="#333"/><circle cx="6.2" cy="4.6" r="0.6" fill="#333"/><circle cx="9.5" cy="4" r="0.6" fill="#333"/><circle cx="9.4" cy="10.6" r="1.3" fill="#333"/></svg></div><div class="tl" style="left:234.5px;color:#333">颜色调整</div><div class="ic" style="left:274px"><svg width="16" height="16" viewBox="0 0 16 16"><circle cx="8" cy="8" r="6" stroke="#333" stroke-width="1.3" fill="none"/><path d="M3.8 3.8L12.2 12.2" stroke="#333" stroke-width="1.3"/></svg></div><div class="tl" style="left:262px;color:#333">边缘屏幕</div><div class="ic" style="left:301.5px"><svg width="16" height="16" viewBox="0 0 16 16"><g transform="translate(-0.8,0.3)"><path d="M8.5 14H3.5Q2.5 14 2.5 13V3Q2.5 2 3.5 2H12.5Q13.5 2 13.5 3V8" stroke="#333" stroke-width="1.15" fill="none"/><path d="M4.3 6.5L6.3 4.8L8.3 6.2L11 4.2" stroke="#333" stroke-width="0.85" fill="none"/><path d="M4.8 9.5V12.8" stroke="#333" stroke-width="1.4"/><circle cx="10.3" cy="10.6" r="2.1" stroke="#333" stroke-width="1.1" fill="none"/><path d="M11.8 12.1L14 14.3" stroke="#333" stroke-width="1.1"/></g></svg></div><div class="tl" style="left:289.5px;color:#333">获取信息</div><div class="ic" style="left:329.5px"><svg width="16" height="16" viewBox="0 0 16 16"><g transform="translate(-1,0.3)"><path d="M6.8 14H3.5Q2.5 14 2.5 13V3Q2.5 2 3.5 2H12.5Q13.5 2 13.5 3V10.8" stroke="#333" stroke-width="1.15" fill="none"/><circle cx="10.6" cy="8.2" r="1.7" stroke="#333" stroke-width="1.05" fill="none"/><rect x="7" y="11.2" width="7.2" height="2.9" rx="1.2" stroke="#333" stroke-width="1.05" fill="none"/></g></svg></div><div class="tl" style="left:317.5px;color:#333">异控设置</div><div class="vdiv" style="left:85.5px"></div><div class="vdiv" style="left:350.5px"></div><div class="vdiv" style="left:417px"></div><div class="dd"><span>1920x1080 60Hz</span><i>&#9662;</i></div></div><div class="gbar"><span style="left:0;width:85.5px">连接菜单</span><span style="left:86.5px;width:264px">配置菜单</span><span style="left:351.5px;width:65.5px">修改分辨率</span><div class="gd" style="left:85.5px"></div><div class="gd" style="left:350.5px"></div></div><div class="hl2"></div><div class="vtab1"><span>输入通道</span></div><div class="vtab2"><span>场景模式</span></div><div class="vline"></div><div class="tg" style="top:76.7px"><i>&#9698;</i>VGA信源</div><div class="ti" style="top:88.9px"><svg class="plug" width="7" height="7" viewBox="0 0 7 7"><path d="M0.8 6.2L3 4M3.8 3.2L6.2 0.8" stroke="#8c8c8c" stroke-width="1.9" stroke-linecap="round"/><path d="M1.5 6L2.6 4.9M4.3 2.7L5.6 1.4" stroke="#c8c8c8" stroke-width=".6"/><circle cx="1.6" cy="1.8" r=".8" fill="#ecd8a0"/><circle cx="5.6" cy="5.4" r=".6" fill="#ecd8a0"/></svg>输入通道13</div><div class="ti" style="top:101.2px"><svg class="plug" width="7" height="7" viewBox="0 0 7 7"><path d="M0.8 6.2L3 4M3.8 3.2L6.2 0.8" stroke="#8c8c8c" stroke-width="1.9" stroke-linecap="round"/><path d="M1.5 6L2.6 4.9M4.3 2.7L5.6 1.4" stroke="#c8c8c8" stroke-width=".6"/><circle cx="1.6" cy="1.8" r=".8" fill="#ecd8a0"/><circle cx="5.6" cy="5.4" r=".6" fill="#ecd8a0"/></svg>输入通道14</div><div class="ti" style="top:113.4px"><svg class="plug" width="7" height="7" viewBox="0 0 7 7"><path d="M0.8 6.2L3 4M3.8 3.2L6.2 0.8" stroke="#8c8c8c" stroke-width="1.9" stroke-linecap="round"/><path d="M1.5 6L2.6 4.9M4.3 2.7L5.6 1.4" stroke="#c8c8c8" stroke-width=".6"/><circle cx="1.6" cy="1.8" r=".8" fill="#ecd8a0"/><circle cx="5.6" cy="5.4" r=".6" fill="#ecd8a0"/></svg>输入通道15</div><div class="ti" style="top:125.7px"><svg class="plug" width="7" height="7" viewBox="0 0 7 7"><path d="M0.8 6.2L3 4M3.8 3.2L6.2 0.8" stroke="#8c8c8c" stroke-width="1.9" stroke-linecap="round"/><path d="M1.5 6L2.6 4.9M4.3 2.7L5.6 1.4" stroke="#c8c8c8" stroke-width=".6"/><circle cx="1.6" cy="1.8" r=".8" fill="#ecd8a0"/><circle cx="5.6" cy="5.4" r=".6" fill="#ecd8a0"/></svg>输入通道16</div><div class="tg" style="top:137.9px"><i>&#9698;</i>DVI信源</div><div class="ti" style="top:150.1px"><svg class="plug" width="7" height="7" viewBox="0 0 7 7"><path d="M0.8 6.2L3 4M3.8 3.2L6.2 0.8" stroke="#8c8c8c" stroke-width="1.9" stroke-linecap="round"/><path d="M1.5 6L2.6 4.9M4.3 2.7L5.6 1.4" stroke="#c8c8c8" stroke-width=".6"/><circle cx="1.6" cy="1.8" r=".8" fill="#ecd8a0"/><circle cx="5.6" cy="5.4" r=".6" fill="#ecd8a0"/></svg>输入通道1</div><div class="ti" style="top:162.4px"><svg class="plug" width="7" height="7" viewBox="0 0 7 7"><path d="M0.8 6.2L3 4M3.8 3.2L6.2 0.8" stroke="#8c8c8c" stroke-width="1.9" stroke-linecap="round"/><path d="M1.5 6L2.6 4.9M4.3 2.7L5.6 1.4" stroke="#c8c8c8" stroke-width=".6"/><circle cx="1.6" cy="1.8" r=".8" fill="#ecd8a0"/><circle cx="5.6" cy="5.4" r=".6" fill="#ecd8a0"/></svg>控制电脑信号</div><div class="ti" style="top:174.6px"><svg class="plug" width="7" height="7" viewBox="0 0 7 7"><path d="M0.8 6.2L3 4M3.8 3.2L6.2 0.8" stroke="#8c8c8c" stroke-width="1.9" stroke-linecap="round"/><path d="M1.5 6L2.6 4.9M4.3 2.7L5.6 1.4" stroke="#c8c8c8" stroke-width=".6"/><circle cx="1.6" cy="1.8" r=".8" fill="#ecd8a0"/><circle cx="5.6" cy="5.4" r=".6" fill="#ecd8a0"/></svg>输入通道5</div><div class="ti" style="top:186.9px"><svg class="plug" width="7" height="7" viewBox="0 0 7 7"><path d="M0.8 6.2L3 4M3.8 3.2L6.2 0.8" stroke="#8c8c8c" stroke-width="1.9" stroke-linecap="round"/><path d="M1.5 6L2.6 4.9M4.3 2.7L5.6 1.4" stroke="#c8c8c8" stroke-width=".6"/><circle cx="1.6" cy="1.8" r=".8" fill="#ecd8a0"/><circle cx="5.6" cy="5.4" r=".6" fill="#ecd8a0"/></svg>输入通道6</div><div class="tg" style="top:199.1px"><i>&#9698;</i>HDMI信源</div><div class="ti" style="top:211.3px"><svg class="plug" width="7" height="7" viewBox="0 0 7 7"><path d="M0.8 6.2L3 4M3.8 3.2L6.2 0.8" stroke="#8c8c8c" stroke-width="1.9" stroke-linecap="round"/><path d="M1.5 6L2.6 4.9M4.3 2.7L5.6 1.4" stroke="#c8c8c8" stroke-width=".6"/><circle cx="1.6" cy="1.8" r=".8" fill="#ecd8a0"/><circle cx="5.6" cy="5.4" r=".6" fill="#ecd8a0"/></svg>输入通道3</div><div class="ti" style="top:223.6px"><svg class="plug" width="7" height="7" viewBox="0 0 7 7"><path d="M0.8 6.2L3 4M3.8 3.2L6.2 0.8" stroke="#8c8c8c" stroke-width="1.9" stroke-linecap="round"/><path d="M1.5 6L2.6 4.9M4.3 2.7L5.6 1.4" stroke="#c8c8c8" stroke-width=".6"/><circle cx="1.6" cy="1.8" r=".8" fill="#ecd8a0"/><circle cx="5.6" cy="5.4" r=".6" fill="#ecd8a0"/></svg>输入通道4</div><div class="ti" style="top:235.8px"><svg class="plug" width="7" height="7" viewBox="0 0 7 7"><path d="M0.8 6.2L3 4M3.8 3.2L6.2 0.8" stroke="#8c8c8c" stroke-width="1.9" stroke-linecap="round"/><path d="M1.5 6L2.6 4.9M4.3 2.7L5.6 1.4" stroke="#c8c8c8" stroke-width=".6"/><circle cx="1.6" cy="1.8" r=".8" fill="#ecd8a0"/><circle cx="5.6" cy="5.4" r=".6" fill="#ecd8a0"/></svg>输入通道7</div><div class="ti" style="top:248.1px"><svg class="plug" width="7" height="7" viewBox="0 0 7 7"><path d="M0.8 6.2L3 4M3.8 3.2L6.2 0.8" stroke="#8c8c8c" stroke-width="1.9" stroke-linecap="round"/><path d="M1.5 6L2.6 4.9M4.3 2.7L5.6 1.4" stroke="#c8c8c8" stroke-width=".6"/><circle cx="1.6" cy="1.8" r=".8" fill="#ecd8a0"/><circle cx="5.6" cy="5.4" r=".6" fill="#ecd8a0"/></svg>输入通道8</div><div class="ti" style="top:260.3px"><svg class="plug" width="7" height="7" viewBox="0 0 7 7"><path d="M0.8 6.2L3 4M3.8 3.2L6.2 0.8" stroke="#8c8c8c" stroke-width="1.9" stroke-linecap="round"/><path d="M1.5 6L2.6 4.9M4.3 2.7L5.6 1.4" stroke="#c8c8c8" stroke-width=".6"/><circle cx="1.6" cy="1.8" r=".8" fill="#ecd8a0"/><circle cx="5.6" cy="5.4" r=".6" fill="#ecd8a0"/></svg>输入通道9</div><div class="ti" style="top:272.5px"><svg class="plug" width="7" height="7" viewBox="0 0 7 7"><path d="M0.8 6.2L3 4M3.8 3.2L6.2 0.8" stroke="#8c8c8c" stroke-width="1.9" stroke-linecap="round"/><path d="M1.5 6L2.6 4.9M4.3 2.7L5.6 1.4" stroke="#c8c8c8" stroke-width=".6"/><circle cx="1.6" cy="1.8" r=".8" fill="#ecd8a0"/><circle cx="5.6" cy="5.4" r=".6" fill="#ecd8a0"/></svg>输入通道10</div><div class="ti" style="top:284.8px"><svg class="plug" width="7" height="7" viewBox="0 0 7 7"><path d="M0.8 6.2L3 4M3.8 3.2L6.2 0.8" stroke="#8c8c8c" stroke-width="1.9" stroke-linecap="round"/><path d="M1.5 6L2.6 4.9M4.3 2.7L5.6 1.4" stroke="#c8c8c8" stroke-width=".6"/><circle cx="1.6" cy="1.8" r=".8" fill="#ecd8a0"/><circle cx="5.6" cy="5.4" r=".6" fill="#ecd8a0"/></svg>输入通道11</div><div class="ti" style="top:297.0px"><svg class="plug" width="7" height="7" viewBox="0 0 7 7"><path d="M0.8 6.2L3 4M3.8 3.2L6.2 0.8" stroke="#8c8c8c" stroke-width="1.9" stroke-linecap="round"/><path d="M1.5 6L2.6 4.9M4.3 2.7L5.6 1.4" stroke="#c8c8c8" stroke-width=".6"/><circle cx="1.6" cy="1.8" r=".8" fill="#ecd8a0"/><circle cx="5.6" cy="5.4" r=".6" fill="#ecd8a0"/></svg>输入通道12</div><div class="tline"></div><div class="grid"><div class="cell" style="left:0px;top:0px"><div class="ph"><svg width="80" height="15" viewBox="0 0 80 15"><path d="M3.5 7.2L8 3.2V5.6Q13.5 5.6 14 12.2Q11.5 8.8 8 8.8V11.2z" fill="#fff"/><g transform="translate(23.5,8)" stroke="#fff" stroke-width="1.5" fill="none"><path d="M-3.8 -3.8L3.8 3.8M3.8 -3.8L-3.8 3.8M-4.6 -2.4L-2.4 -4.6M4.6 -2.4L2.4 -4.6M-4.6 2.4L-2.4 4.6M4.6 2.4L2.4 4.6"/></g><g transform="translate(39,8)" stroke="#fff" stroke-width="1.5" fill="none"><path d="M-5 -4.2H5M0 -4.2V5M-4 2.6L0 -1.2L4 2.6"/></g><g transform="translate(54,8)" stroke="#fff" stroke-width="1.5" fill="none"><path d="M-5 4.3H5M0 -5V4.3M-4 -1.8L0 2L4 -1.8"/></g><g transform="translate(69.5,8)" stroke="#fff" stroke-width="1.6" fill="none"><path d="M-4 -4L4 4M4 -4L-4 4"/></g></svg></div><div class="img im1"><b style="left:10%;top:0;width:80%;height:62%;background:repeating-conic-gradient(from -60deg at 50% 95%,transparent 0deg 6deg,rgba(225,205,110,.32) 6deg 9deg,transparent 9deg 15deg);-webkit-mask-image:radial-gradient(ellipse 60% 90% at 50% 100%,#000 40%,transparent 100%)"></b><b style="left:22%;top:9%;width:56%;height:18%;background:radial-gradient(circle,rgba(200,210,250,.55) 0 0.7px,transparent 1.3px) 0 0/9% 50%"></b><b style="left:18%;top:30%;width:64%;height:42%;background:radial-gradient(ellipse 50% 50% at 50% 55%,rgba(175,165,110,.75),rgba(100,100,85,.5) 60%,transparent 100%)"></b><b style="left:0;top:2%;width:8%;height:84%;background:linear-gradient(90deg,#2040a8,#4a7ae0 50%,#2a50b8)"></b><b style="right:0;top:2%;width:9%;height:86%;background:linear-gradient(90deg,#3058c0,#5a8cf0 50%,#3058c0)"></b><b style="left:12%;top:26%;width:12%;height:50%;background:linear-gradient(#2a3c8c,#4064c0 50%,#34509c)"></b><b style="left:76%;top:26%;width:12%;height:52%;background:linear-gradient(#2a3c8c,#4064c0 50%,#34509c)"></b><b style="left:17%;top:58%;width:70%;height:30%;background:radial-gradient(ellipse 50% 50% at 50% 60%,#c8dcf6,#8cb0e6 45%,rgba(90,130,210,.55) 72%,transparent 100%)"></b><b style="left:30%;top:46%;width:42%;height:26%;background:radial-gradient(ellipse 50% 50%,rgba(235,200,210,.55),transparent 70%)"></b><b style="left:0;top:86%;width:100%;height:14%;background:linear-gradient(#8890b8,#5a6080)"></b></div></div><div class="cell" style="left:104px;top:0px"><div class="ph"><svg width="80" height="15" viewBox="0 0 80 15"><path d="M3.5 7.2L8 3.2V5.6Q13.5 5.6 14 12.2Q11.5 8.8 8 8.8V11.2z" fill="#fff"/><g transform="translate(23.5,8)" stroke="#fff" stroke-width="1.5" fill="none"><path d="M-3.8 -3.8L3.8 3.8M3.8 -3.8L-3.8 3.8M-4.6 -2.4L-2.4 -4.6M4.6 -2.4L2.4 -4.6M-4.6 2.4L-2.4 4.6M4.6 2.4L2.4 4.6"/></g><g transform="translate(39,8)" stroke="#fff" stroke-width="1.5" fill="none"><path d="M-5 -4.2H5M0 -4.2V5M-4 2.6L0 -1.2L4 2.6"/></g><g transform="translate(54,8)" stroke="#fff" stroke-width="1.5" fill="none"><path d="M-5 4.3H5M0 -5V4.3M-4 -1.8L0 2L4 -1.8"/></g><g transform="translate(69.5,8)" stroke="#fff" stroke-width="1.6" fill="none"><path d="M-4 -4L4 4M4 -4L-4 4"/></g></svg></div><div class="img im2"><b style="left:5%;top:15%;width:45%;height:55%;background:radial-gradient(circle,rgba(150,170,240,.35) 0 0.5px,transparent 1px) 0 0/11% 17%,radial-gradient(circle,rgba(200,210,255,.25) 0 0.5px,transparent 1px) 3px 2px/14% 21%"></b><b style="left:45%;top:28%;width:46%;height:72%;border-radius:50% 50% 35% 35%/60% 60% 20% 20%;background:radial-gradient(ellipse 55% 45% at 50% 22%,#f4f8ff 0%,#b0d4f8 30%,rgba(80,150,240,.9) 55%,#3a80e8 75%,#40b8f0 100%)"></b><b style="left:31%;top:41%;width:9%;height:14%;border-radius:50%;background:radial-gradient(#f0e0ff,#b080e0)"></b><b style="left:41.5%;top:44%;width:5%;height:8%;border-radius:50%;background:#e8d060"></b><b style="left:1%;top:72%;width:14%;height:24%;border-radius:50%;background:radial-gradient(rgba(40,10,70,.5) 40%,#9040c0 75%,rgba(140,60,200,.6))"></b><b style="left:26%;top:73%;width:12%;height:22%;border-radius:50%;background:radial-gradient(rgba(40,10,70,.5) 40%,#9040c0 75%,rgba(140,60,200,.6))"></b><b style="left:46%;top:72%;width:11%;height:23%;border-radius:50%;background:radial-gradient(rgba(100,80,200,.3) 40%,#a050c8 80%,rgba(140,60,200,.6))"></b><b style="left:66%;top:72%;width:11%;height:23%;border-radius:50%;background:radial-gradient(rgba(100,80,200,.3) 40%,#a050c8 80%,rgba(140,60,200,.6))"></b><b style="left:87%;top:72%;width:13%;height:24%;border-radius:50%;background:radial-gradient(rgba(40,10,70,.5) 40%,#9040c0 75%,rgba(140,60,200,.6))"></b><b style="left:0;top:94%;width:100%;height:6%;background:linear-gradient(90deg,#7048c8,#b070e0,#8050d0)"></b><b style="left:7.5%;top:38%;width:1.2%;height:56%;background:#45455a"></b><b style="left:32%;top:50%;width:1.2%;height:44%;background:#45455a"></b><b style="left:51%;top:42%;width:1.5%;height:52%;background:#40405a"></b><b style="left:71%;top:45%;width:1.2%;height:49%;background:#40405a"></b><b style="left:93%;top:40%;width:1.2%;height:54%;background:#45455a"></b></div></div><div class="cell" style="left:0px;top:77px"><div class="ph"><svg width="80" height="15" viewBox="0 0 80 15"><path d="M3.5 7.2L8 3.2V5.6Q13.5 5.6 14 12.2Q11.5 8.8 8 8.8V11.2z" fill="#fff"/><g transform="translate(23.5,8)" stroke="#fff" stroke-width="1.5" fill="none"><path d="M-3.8 -3.8L3.8 3.8M3.8 -3.8L-3.8 3.8M-4.6 -2.4L-2.4 -4.6M4.6 -2.4L2.4 -4.6M-4.6 2.4L-2.4 4.6M4.6 2.4L2.4 4.6"/></g><g transform="translate(39,8)" stroke="#fff" stroke-width="1.5" fill="none"><path d="M-5 -4.2H5M0 -4.2V5M-4 2.6L0 -1.2L4 2.6"/></g><g transform="translate(54,8)" stroke="#fff" stroke-width="1.5" fill="none"><path d="M-5 4.3H5M0 -5V4.3M-4 -1.8L0 2L4 -1.8"/></g><g transform="translate(69.5,8)" stroke="#fff" stroke-width="1.6" fill="none"><path d="M-4 -4L4 4M4 -4L-4 4"/></g></svg></div><div class="img im3"><b style="left:0;top:0;width:100%;height:66%;background:linear-gradient(90deg,rgba(8,16,50,.6) 0 3%,transparent 3% 97%,rgba(8,16,50,.6) 97%),repeating-linear-gradient(90deg,transparent 0 2%,rgba(60,110,210,.32) 2% 10%,transparent 10% 12.5%),repeating-linear-gradient(transparent 0 6%,rgba(50,100,200,.3) 6% 22%,transparent 22% 25%)"></b><b style="left:10%;top:6%;width:12%;height:7%;background:rgba(220,230,255,.55)"></b><b style="left:72%;top:6%;width:12%;height:7%;background:rgba(220,230,255,.55)"></b><b style="left:0;top:64%;width:100%;height:5%;background:#3a78e0"></b><b style="left:0;top:69%;width:100%;height:31%;background:linear-gradient(#182a60,#0e1a40)"></b><b style="left:25%;top:50%;width:53%;height:50%;border-radius:30% 30% 0 0/40% 40% 0 0;background:#eeeef6"></b><b style="left:44%;top:47%;width:15%;height:44%;background:repeating-linear-gradient(45deg,#26262e 0 2px,#70707a 2px 3px);clip-path:polygon(0 0,100% 0,75% 100%,25% 100%)"></b><b style="left:40%;top:6%;width:24%;height:32%;border-radius:50% 50% 35% 35%;background:#4a3426"></b><b style="left:43%;top:18%;width:18%;height:33%;border-radius:40% 40% 45% 45%;background:#ecc8aa"></b><b style="left:20%;top:88%;width:58%;height:9%;background:#2c60c0"></b><b style="left:6%;top:86%;width:13%;height:11%;background:#c8a848"></b></div></div><div class="cell" style="left:104px;top:77px"><div class="ph"><svg width="80" height="15" viewBox="0 0 80 15"><path d="M3.5 7.2L8 3.2V5.6Q13.5 5.6 14 12.2Q11.5 8.8 8 8.8V11.2z" fill="#fff"/><g transform="translate(23.5,8)" stroke="#fff" stroke-width="1.5" fill="none"><path d="M-3.8 -3.8L3.8 3.8M3.8 -3.8L-3.8 3.8M-4.6 -2.4L-2.4 -4.6M4.6 -2.4L2.4 -4.6M-4.6 2.4L-2.4 4.6M4.6 2.4L2.4 4.6"/></g><g transform="translate(39,8)" stroke="#fff" stroke-width="1.5" fill="none"><path d="M-5 -4.2H5M0 -4.2V5M-4 2.6L0 -1.2L4 2.6"/></g><g transform="translate(54,8)" stroke="#fff" stroke-width="1.5" fill="none"><path d="M-5 4.3H5M0 -5V4.3M-4 -1.8L0 2L4 -1.8"/></g><g transform="translate(69.5,8)" stroke="#fff" stroke-width="1.6" fill="none"><path d="M-4 -4L4 4M4 -4L-4 4"/></g></svg></div><div class="img im4"><b style="left:0;top:0;width:100%;height:100%;background:repeating-linear-gradient(90deg,rgba(150,20,5,.35) 0 2%,transparent 2% 6%,rgba(255,130,100,.22) 6% 8%,transparent 8% 11%)"></b><b style="left:24%;top:52%;width:44%;height:48%;border-radius:30% 30% 0 0/40% 40% 0 0;background:#1e2642"></b><b style="left:42%;top:50%;width:11%;height:22%;background:#e8e4ec;clip-path:polygon(0 0,100% 0,50% 100%)"></b><b style="left:46%;top:55%;width:3.5%;height:18%;background:#b02030"></b><b style="left:40%;top:12%;width:17%;height:40%;border-radius:45%;background:#d4aea0"></b><b style="left:39%;top:5%;width:19%;height:15%;border-radius:50% 50% 25% 25%;background:#1a1616"></b><b style="left:33%;top:66%;width:30%;height:6%;background:radial-gradient(circle,#8a8a90 0 35%,transparent 40%) 0 0/25% 100%"></b><b style="left:0;top:72%;width:92%;height:13%;background:linear-gradient(90deg,#c42014,#d42a1a 70%,rgba(212,42,26,.2))"></b><b style="left:2%;top:76%;width:84%;height:4%;background:repeating-linear-gradient(90deg,rgba(255,235,215,.8) 0 1.5%,transparent 1.5% 2.4%)"></b><b style="left:20%;top:85%;width:58%;height:15%;background:linear-gradient(#2a2a34,#141418)"></b></div></div></div><div class="hl" style="top:237px"></div><div class="sp">信号预览</div><div class="hl" style="top:250px"></div><div class="chk">&#10003;</div><div class="chkl">预览</div><div class="btn" style="top:289.5px">播放</div><div class="btn" style="top:301.3px">暂停</div><div class="thumb img im1" style="left:168.4px"><b style="left:10%;top:0;width:80%;height:62%;background:repeating-conic-gradient(from -60deg at 50% 95%,transparent 0deg 6deg,rgba(225,205,110,.32) 6deg 9deg,transparent 9deg 15deg);-webkit-mask-image:radial-gradient(ellipse 60% 90% at 50% 100%,#000 40%,transparent 100%)"></b><b style="left:22%;top:9%;width:56%;height:18%;background:radial-gradient(circle,rgba(200,210,250,.55) 0 0.7px,transparent 1.3px) 0 0/9% 50%"></b><b style="left:18%;top:30%;width:64%;height:42%;background:radial-gradient(ellipse 50% 50% at 50% 55%,rgba(175,165,110,.75),rgba(100,100,85,.5) 60%,transparent 100%)"></b><b style="left:0;top:2%;width:8%;height:84%;background:linear-gradient(90deg,#2040a8,#4a7ae0 50%,#2a50b8)"></b><b style="right:0;top:2%;width:9%;height:86%;background:linear-gradient(90deg,#3058c0,#5a8cf0 50%,#3058c0)"></b><b style="left:12%;top:26%;width:12%;height:50%;background:linear-gradient(#2a3c8c,#4064c0 50%,#34509c)"></b><b style="left:76%;top:26%;width:12%;height:52%;background:linear-gradient(#2a3c8c,#4064c0 50%,#34509c)"></b><b style="left:17%;top:58%;width:70%;height:30%;background:radial-gradient(ellipse 50% 50% at 50% 60%,#c8dcf6,#8cb0e6 45%,rgba(90,130,210,.55) 72%,transparent 100%)"></b><b style="left:30%;top:46%;width:42%;height:26%;background:radial-gradient(ellipse 50% 50%,rgba(235,200,210,.55),transparent 70%)"></b><b style="left:0;top:86%;width:100%;height:14%;background:linear-gradient(#8890b8,#5a6080)"></b><span class="cap">输入通道1</span></div><div class="thumb img im2" style="left:255.8px"><b style="left:5%;top:15%;width:45%;height:55%;background:radial-gradient(circle,rgba(150,170,240,.35) 0 0.5px,transparent 1px) 0 0/11% 17%,radial-gradient(circle,rgba(200,210,255,.25) 0 0.5px,transparent 1px) 3px 2px/14% 21%"></b><b style="left:45%;top:28%;width:46%;height:72%;border-radius:50% 50% 35% 35%/60% 60% 20% 20%;background:radial-gradient(ellipse 55% 45% at 50% 22%,#f4f8ff 0%,#b0d4f8 30%,rgba(80,150,240,.9) 55%,#3a80e8 75%,#40b8f0 100%)"></b><b style="left:31%;top:41%;width:9%;height:14%;border-radius:50%;background:radial-gradient(#f0e0ff,#b080e0)"></b><b style="left:41.5%;top:44%;width:5%;height:8%;border-radius:50%;background:#e8d060"></b><b style="left:1%;top:72%;width:14%;height:24%;border-radius:50%;background:radial-gradient(rgba(40,10,70,.5) 40%,#9040c0 75%,rgba(140,60,200,.6))"></b><b style="left:26%;top:73%;width:12%;height:22%;border-radius:50%;background:radial-gradient(rgba(40,10,70,.5) 40%,#9040c0 75%,rgba(140,60,200,.6))"></b><b style="left:46%;top:72%;width:11%;height:23%;border-radius:50%;background:radial-gradient(rgba(100,80,200,.3) 40%,#a050c8 80%,rgba(140,60,200,.6))"></b><b style="left:66%;top:72%;width:11%;height:23%;border-radius:50%;background:radial-gradient(rgba(100,80,200,.3) 40%,#a050c8 80%,rgba(140,60,200,.6))"></b><b style="left:87%;top:72%;width:13%;height:24%;border-radius:50%;background:radial-gradient(rgba(40,10,70,.5) 40%,#9040c0 75%,rgba(140,60,200,.6))"></b><b style="left:0;top:94%;width:100%;height:6%;background:linear-gradient(90deg,#7048c8,#b070e0,#8050d0)"></b><b style="left:7.5%;top:38%;width:1.2%;height:56%;background:#45455a"></b><b style="left:32%;top:50%;width:1.2%;height:44%;background:#45455a"></b><b style="left:51%;top:42%;width:1.5%;height:52%;background:#40405a"></b><b style="left:71%;top:45%;width:1.2%;height:49%;background:#40405a"></b><b style="left:93%;top:40%;width:1.2%;height:54%;background:#45455a"></b><span class="cap">控制电脑信号</span></div><div class="thumb img im3" style="left:344.2px"><b style="left:0;top:0;width:100%;height:66%;background:linear-gradient(90deg,rgba(8,16,50,.6) 0 3%,transparent 3% 97%,rgba(8,16,50,.6) 97%),repeating-linear-gradient(90deg,transparent 0 2%,rgba(60,110,210,.32) 2% 10%,transparent 10% 12.5%),repeating-linear-gradient(transparent 0 6%,rgba(50,100,200,.3) 6% 22%,transparent 22% 25%)"></b><b style="left:10%;top:6%;width:12%;height:7%;background:rgba(220,230,255,.55)"></b><b style="left:72%;top:6%;width:12%;height:7%;background:rgba(220,230,255,.55)"></b><b style="left:0;top:64%;width:100%;height:5%;background:#3a78e0"></b><b style="left:0;top:69%;width:100%;height:31%;background:linear-gradient(#182a60,#0e1a40)"></b><b style="left:25%;top:50%;width:53%;height:50%;border-radius:30% 30% 0 0/40% 40% 0 0;background:#eeeef6"></b><b style="left:44%;top:47%;width:15%;height:44%;background:repeating-linear-gradient(45deg,#26262e 0 2px,#70707a 2px 3px);clip-path:polygon(0 0,100% 0,75% 100%,25% 100%)"></b><b style="left:40%;top:6%;width:24%;height:32%;border-radius:50% 50% 35% 35%;background:#4a3426"></b><b style="left:43%;top:18%;width:18%;height:33%;border-radius:40% 40% 45% 45%;background:#ecc8aa"></b><b style="left:20%;top:88%;width:58%;height:9%;background:#2c60c0"></b><b style="left:6%;top:86%;width:13%;height:11%;background:#c8a848"></b><span class="cap">输入通道2</span></div><div class="thumb img im4" style="left:432.2px"><b style="left:0;top:0;width:100%;height:100%;background:repeating-linear-gradient(90deg,rgba(150,20,5,.35) 0 2%,transparent 2% 6%,rgba(255,130,100,.22) 6% 8%,transparent 8% 11%)"></b><b style="left:24%;top:52%;width:44%;height:48%;border-radius:30% 30% 0 0/40% 40% 0 0;background:#1e2642"></b><b style="left:42%;top:50%;width:11%;height:22%;background:#e8e4ec;clip-path:polygon(0 0,100% 0,50% 100%)"></b><b style="left:46%;top:55%;width:3.5%;height:18%;background:#b02030"></b><b style="left:40%;top:12%;width:17%;height:40%;border-radius:45%;background:#d4aea0"></b><b style="left:39%;top:5%;width:19%;height:15%;border-radius:50% 50% 25% 25%;background:#1a1616"></b><b style="left:33%;top:66%;width:30%;height:6%;background:radial-gradient(circle,#8a8a90 0 35%,transparent 40%) 0 0/25% 100%"></b><b style="left:0;top:72%;width:92%;height:13%;background:linear-gradient(90deg,#c42014,#d42a1a 70%,rgba(212,42,26,.2))"></b><b style="left:2%;top:76%;width:84%;height:4%;background:repeating-linear-gradient(90deg,rgba(255,235,215,.8) 0 1.5%,transparent 1.5% 2.4%)"></b><b style="left:20%;top:85%;width:58%;height:15%;background:linear-gradient(#2a2a34,#141418)"></b><span class="cap">输入通道4</span></div><div class="hl" style="top:313px"></div><svg class="chev" style="left:255.5px" width="6" height="9" viewBox="0 0 6 9"><path d="M5 0.5L1 4.5L5 8.5" stroke="#7a7ec8" stroke-width="1" fill="none"/></svg><div class="pc">1</div><div class="pn" style="left:286.7px">2</div><div class="pn" style="left:305.8px">3</div><div class="pn" style="left:325.0px">4</div><div class="pn" style="left:343.7px">5</div><div class="pn" style="left:362.6px">6</div><div class="pn" style="left:381.6px">7</div><div class="pn" style="left:400.5px">8</div><div class="pn" style="left:419.3px">9</div><div class="pn" style="left:438.5px">10</div><svg class="chev" style="left:459px" width="6" height="9" viewBox="0 0 6 9"><path d="M1 0.5L5 4.5L1 8.5" stroke="#7a7ec8" stroke-width="1" fill="none"/></svg><div class="jump">跳转到</div><div class="inp">1<svg width="5" height="7" viewBox="0 0 5 7" style="position:absolute;right:1.5px;top:0"><path d="M0.8 2.8L2.5 1L4.2 2.8zM0.8 4.2L2.5 6L4.2 4.2z" fill="#888"/></svg></div><div class="ye">页</div></div></div></body></html>
